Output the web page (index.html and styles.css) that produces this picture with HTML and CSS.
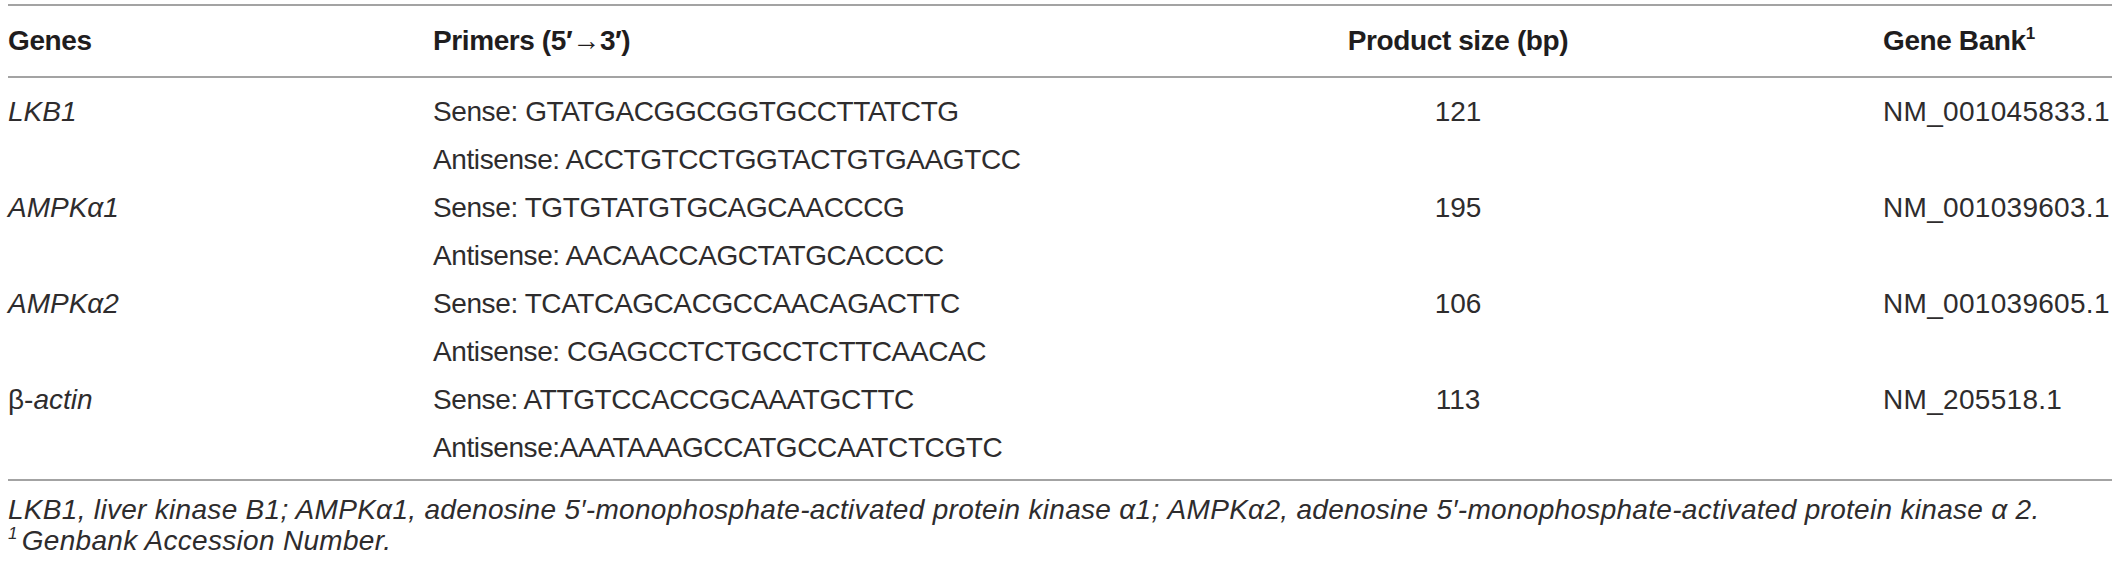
FILE: index.html
```html
<!DOCTYPE html>
<html>
<head>
<meta charset="utf-8">
<link rel="stylesheet" href="styles.css">
</head>
<body>
<div class="page">
  <table class="primers">
    <colgroup>
      <col class="c-gene">
      <col class="c-primer">
      <col class="c-size">
      <col class="c-bank">
    </colgroup>
    <thead>
      <tr>
        <th>Genes</th>
        <th>Primers (5′→3′)</th>
        <th class="center">Product size (bp)</th>
        <th>Gene Bank<sup>1</sup></th>
      </tr>
    </thead>
    <tbody>
      <tr class="first">
        <td><i>LKB1</i></td>
        <td class="seq"><div>Sense: GTATGACGGCGGTGCCTTATCTG</div><div>Antisense: ACCTGTCCTGGTACTGTGAAGTCC</div></td>
        <td class="center">121</td>
        <td class="acc">NM_001045833.1</td>
      </tr>
      <tr>
        <td><i>AMPKα1</i></td>
        <td class="seq"><div>Sense: TGTGTATGTGCAGCAACCCG</div><div>Antisense: AACAACCAGCTATGCACCCC</div></td>
        <td class="center">195</td>
        <td class="acc">NM_001039603.1</td>
      </tr>
      <tr>
        <td><i>AMPKα2</i></td>
        <td class="seq"><div>Sense: TCATCAGCACGCCAACAGACTTC</div><div>Antisense: CGAGCCTCTGCCTCTTCAACAC</div></td>
        <td class="center">106</td>
        <td class="acc">NM_001039605.1</td>
      </tr>
      <tr class="last">
        <td>β-<i>actin</i></td>
        <td class="seq"><div>Sense: ATTGTCCACCGCAAATGCTTC</div><div>Antisense:AAATAAAGCCATGCCAATCTCGTC</div></td>
        <td class="center">113</td>
        <td class="acc">NM_205518.1</td>
      </tr>
    </tbody>
  </table>
  <div class="notes">
    <p><i>LKB1, liver kinase B1; AMPKα1, adenosine 5′-monophosphate-activated protein kinase α1; AMPKα2, adenosine 5′-monophosphate-activated protein kinase α 2.</i></p>
    <p><sup>1</sup><i>Genbank Accession Number.</i></p>
  </div>
</div>
</body>
</html>
```

FILE: styles.css
```css
html, body {
  margin: 0;
  padding: 0;
  background: #ffffff;
}

body {
  font-family: "Liberation Sans", Arial, Helvetica, sans-serif;
  color: #2e2c2d;
}

.page {
  padding: 4px 8px 0 8px;
}

.primers {
  width: 2104px;
  table-layout: fixed;
  border-collapse: collapse;
  font-size: 28px;
}

.c-gene { width: 425px; }
.c-primer { width: 600px; }
.c-size { width: 850px; }
.c-bank { width: auto; }

.primers th {
  font-weight: bold;
  color: #1f1d1e;
  text-align: left;
  line-height: 70px;
  padding: 0;
  vertical-align: top;
  border-top: 2px solid #a3a3a3;
  border-bottom: 2px solid #a3a3a3;
  letter-spacing: -0.4px;
  white-space: nowrap;
}

.primers th sup {
  font-size: 17px;
  vertical-align: 11px;
  line-height: 0;
  letter-spacing: 0;
}

.primers td {
  padding: 0;
  vertical-align: top;
  line-height: 48px;
  white-space: nowrap;
}

.primers td.seq {
  letter-spacing: -0.4px;
}

.primers td.acc {
  letter-spacing: 0.3px;
}

.primers tr.first td { padding-top: 10px; }
.primers tr.last td { padding-bottom: 7px; border-bottom: 2px solid #a3a3a3; }

.center { text-align: center; }
.primers th.center { text-align: center; }

.notes {
  font-size: 28px;
  line-height: 31px;
  padding-top: 13px;
  letter-spacing: 0.3px;
}

.notes p {
  margin: 0;
  white-space: nowrap;
}

.notes sup {
  font-size: 17px;
  font-style: italic;
  vertical-align: 11px;
  line-height: 0;
  margin-right: 4px;
}
```
